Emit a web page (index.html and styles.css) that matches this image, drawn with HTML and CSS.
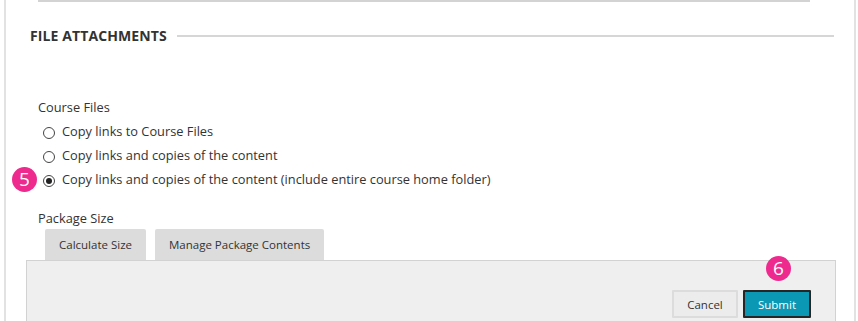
FILE: index.html
```html
<!DOCTYPE html>
<html lang="en">
<head>
    <meta charset="UTF-8">
    <meta name="viewport" content="width=device-width, initial-scale=1.0">
    <title>File Attachments</title>
    <link rel="stylesheet" href="styles.css">
</head>
<body>
    <div class="panel">
        <div class="top-rule"></div>

        <div class="section-head">
            <h2>File Attachments</h2>
            <span class="rule"></span>
        </div>

        <div class="field">
            <div class="label">Course Files</div>
            <ul class="options">
                <li>
                    <label><input type="radio" name="files"> Copy links to Course Files</label>
                </li>
                <li>
                    <label><input type="radio" name="files"> Copy links and copies of the content</label>
                </li>
                <li class="marked">
                    <span class="step step-5">5</span>
                    <label><input type="radio" name="files" checked> Copy links and copies of the content (include entire course home folder)</label>
                </li>
            </ul>
        </div>

        <div class="field package">
            <div class="label">Package Size</div>
            <div class="tools">
                <button class="tool">Calculate Size</button>
                <button class="tool">Manage Package Contents</button>
            </div>
        </div>

        <div class="submit-bar">
            <button class="btn cancel">Cancel</button>
            <div class="submit-wrap">
                <span class="step step-6">6</span>
                <button class="btn submit">Submit</button>
            </div>
        </div>
    </div>
</body>
</html>
```

FILE: styles.css
```css
/* General */
html, body {
    height: 100%;
}

body {
    margin: 0;
    padding-left: 4px;
    background: #ffffff;
    font-family: 'Open Sans', 'Liberation Sans', sans-serif;
    color: #333333;
    overflow: hidden;
}

.panel {
    width: 848px;
    height: 100%;
    border-left: 2px solid #e2e2e2;
    border-right: 2px solid #e2e2e2;
    display: flex;
    flex-direction: column;
}

.top-rule {
    width: 772px;
    height: 2px;
    margin-left: 32px;
    background: #d3d3d3;
}

/* Heading */
.section-head {
    display: flex;
    align-items: center;
    margin: 24px 20px 0 24px;
}

.section-head h2 {
    margin: 0;
    font-size: 14px;
    font-weight: 700;
    text-transform: uppercase;
    letter-spacing: 0.1px;
    line-height: 20px;
    color: #333333;
}

.section-head .rule {
    flex: 1;
    height: 2px;
    margin-left: 10px;
    background: #d6d6d6;
}

/* Fields */
.field {
    padding-left: 32px;
    font-size: 12.8px;
    line-height: 18px;
}

.field .label {
    margin-top: 52px;
}

.options {
    list-style: none;
    margin: 6px 0 0;
    padding: 0 0 0 5px;
}

.options li {
    position: relative;
    height: 24px;
}

.options label {
    display: flex;
    align-items: center;
    gap: 7px;
}

.options input {
    appearance: none;
    -webkit-appearance: none;
    width: 12px;
    height: 12px;
    margin: 3px 0 0;
    border: 1px solid #444444;
    border-radius: 50%;
    background: #ffffff;
    position: relative;
}

.options input:checked::after {
    content: '';
    position: absolute;
    left: 2px;
    top: 2px;
    width: 6px;
    height: 6px;
    border-radius: 50%;
    background: #222222;
}

/* Step badges */
.step {
    position: absolute;
    width: 25px;
    height: 25px;
    border-radius: 50%;
    background: #ee2a8e;
    color: #ffffff;
    font-size: 19px;
    line-height: 25px;
    text-align: center;
}

.step-5 {
    left: -31px;
    top: -3px;
}

.step-6 {
    left: 23px;
    top: -34px;
}

/* Package */
.package .label {
    margin-top: 15px;
}

.tools {
    display: flex;
    gap: 9px;
    margin: 2px 0 0 7px;
}

.tool {
    font-family: inherit;
    font-size: 11.5px;
    color: #333333;
    background: #dcdcdc;
    border: none;
    border-radius: 2px 2px 0 0;
    height: 31px;
    padding: 0 14px;
}

/* Submit bar */
.submit-bar {
    flex: 1;
    margin: 0 18px 0 20px;
    background: #efefef;
    border: 1px solid #d2d2d2;
    border-bottom: none;
    display: flex;
    justify-content: flex-end;
    align-items: flex-start;
    gap: 5px;
    padding: 29px 24px 0 0;
}

.submit-wrap {
    position: relative;
}

.btn {
    font-family: inherit;
    font-size: 11.5px;
    height: 28px;
    padding: 0 12px;
    border-radius: 1px;
}

.cancel {
    background: #ececec;
    color: #333333;
    border: 2px solid #dcdcdc;
    width: 66px;
}

.submit {
    background: #0b98b4;
    color: #ffffff;
    border: 2px solid #262626;
    width: 68px;
}
```
